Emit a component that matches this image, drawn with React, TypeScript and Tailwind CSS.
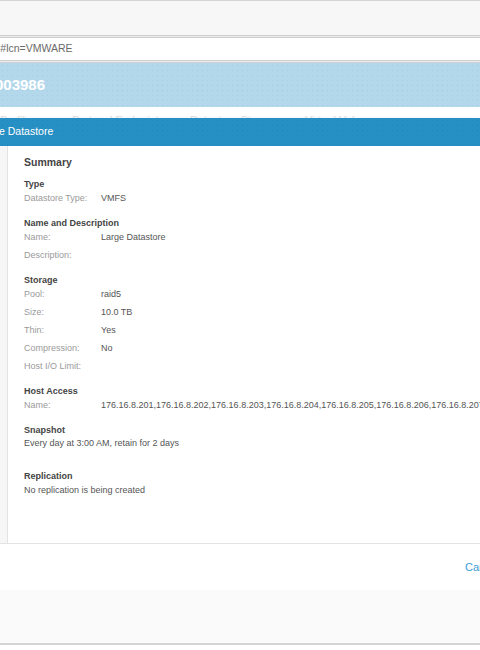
import React from 'react';

const dots =
  'bg-[radial-gradient(rgba(0,0,0,0.06)_0.6px,transparent_0.8px)] bg-[length:5px_5px]';

const Row: React.FC<{ label: string; value?: string }> = ({ label, value }) => (
  <div className="flex h-[18px] items-center whitespace-nowrap">
    <span className="w-[77px] shrink-0 text-[#9a9a9a]">{label}</span>
    <span className="text-[#555]">{value}</span>
  </div>
);

const Heading: React.FC<{ children: React.ReactNode }> = ({ children }) => (
  <div className="h-[14px] font-bold text-[#444]">{children}</div>
);

const Section: React.FC<{ title: string; children: React.ReactNode; className?: string }> = ({
  title,
  children,
  className = 'mt-[11px]',
}) => (
  <div className={className}>
    <Heading>{title}</Heading>
    <div className="-mt-[4px]">{children}</div>
  </div>
);

const App: React.FC = () => {
  const ips = [201, 202, 203, 204, 205, 206, 207, 208, 209, 210]
    .map((n) => `176.16.8.${n}`)
    .join(',');

  return (
    <div className="h-[650px] w-[480px] overflow-hidden bg-white font-['Liberation_Sans',Arial,sans-serif]">
      {/* browser chrome */}
      <div className="h-[35px] border-t border-[#d4d4d4] bg-[#f7f7f7]" />
      <div className="h-[3px] border-y border-[#cfcfcf] bg-[#ececec]" />
      <div className="flex h-[22px] items-center bg-white text-[10.5px] text-[#6a6a6a]">
        <span className="-ml-[2px]">l#lcn=VMWARE</span>
      </div>
      <div className="h-[3px] border-y border-[#cfcfcf] bg-[#ececec]" />

      {/* page title band */}
      <div className={`flex h-[44px] items-center bg-[#b4d8eb] ${dots}`}>
        <span className="-ml-[5px] text-[15px] font-bold text-white">003986</span>
      </div>

      {/* faint tabs behind the dialog */}
      <div className="h-[11px] overflow-hidden bg-white">
        <div className="flex whitespace-nowrap pt-[8px] text-[11px] leading-none text-[#dadada]">
          <span className="w-[72px]">Profiles</span>
          <span className="w-[118px]">Protocol Endpoints</span>
          <span className="w-[115px]">Datastore Storage</span>
          <span>Virtual Volumes</span>
        </div>
      </div>

      {/* dialog */}
      <div className="shadow-[0_2px_4px_rgba(0,0,0,0.25)]">
        <div className={`flex h-[28px] items-center bg-[#268fc3] ${dots}`}>
          <span className="-ml-[1px] text-[10.5px] text-white">e Datastore</span>
        </div>

        <div className="flex h-[397px]">
          <div className="w-[8px] shrink-0 border-r border-[#e3e3e3] bg-[#f6f6f6]" />
          <div className="min-w-0 flex-1 pl-[16px] pt-[11px] text-[9px] leading-none">
            <div className="mb-[12px] text-[10.5px] font-bold text-[#444]">Summary</div>

            <Section title="Type" className="">
              <Row label="Datastore Type:" value="VMFS" />
            </Section>

            <Section title="Name and Description">
              <Row label="Name:" value="Large Datastore" />
              <Row label="Description:" />
            </Section>

            <Section title="Storage">
              <Row label="Pool:" value="raid5" />
              <Row label="Size:" value="10.0 TB" />
              <Row label="Thin:" value="Yes" />
              <Row label="Compression:" value="No" />
              <Row label="Host I/O Limit:" />
            </Section>

            <Section title="Host Access">
              <Row label="Name:" value={ips} />
            </Section>

            <div className="mt-[11px]">
              <Heading>Snapshot</Heading>
              <div className="-mt-[1px] h-[16px] text-[#555]">Every day at 3:00 AM, retain for 2 days</div>
            </div>

            <div className="mt-[17px]">
              <Heading>Replication</Heading>
              <div className="h-[16px] text-[#555]">No replication is being created</div>
            </div>
          </div>
        </div>

        <div className="flex h-[47px] items-center justify-end border-t border-[#e3e3e3] bg-white">
          <span className="-mr-[14px] w-[29px] text-[11px] text-[#3a9ad6]">Cancel</span>
        </div>
      </div>

      {/* page below */}
      <div className="h-[55px] border-b-2 border-[#d4d4d4] bg-[#fafafa]" />
    </div>
  );
};

export default App;
